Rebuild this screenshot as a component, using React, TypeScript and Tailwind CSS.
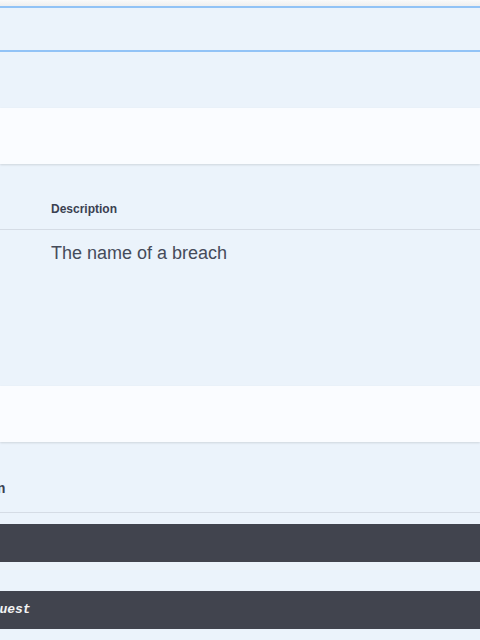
export default function App() {
  return (
    <div className="w-[480px] h-[640px] overflow-hidden bg-[#ebf3fb] font-['Liberation_Sans',Arial,sans-serif] text-[#3b4151]">
      {/* top edge */}
      <div className="h-[6px] bg-gradient-to-b from-[#fafafa] to-[#efefef]" />
      <div className="h-[2px] bg-[#92c3f6]" />

      {/* summary */}
      <div className="h-[44px] border-b-2 border-[#92c3f6]" />

      {/* description area */}
      <div className="h-[56px]" />

      {/* section header */}
      <div className="h-[56px] bg-[#fafcff] shadow-[0_1px_2px_rgba(0,0,0,0.12)]" />

      {/* parameters table */}
      <div className="mt-[2px]">
        <div className="h-[64px] flex items-end border-b border-[#d5dce5]">
          <span className="ml-[51px] mb-[13px] text-[12px] font-bold leading-[14px]">Description</span>
        </div>
        <div className="h-[156px] pt-[12px]">
          <p className="ml-[51px] text-[18px] leading-[22px] text-[#454b5a]">The name of a breach</p>
        </div>
      </div>

      {/* responses header */}
      <div className="h-[56px] bg-[#fafcff] shadow-[0_1px_2px_rgba(0,0,0,0.12)]" />

      <div className="mt-[2px] h-[69px] flex items-end border-b border-[#d5dce5]">
        <span className="-ml-[3px] mb-[15px] font-['Liberation_Mono',monospace] text-[14px] font-semibold leading-[16px]">
          n
        </span>
      </div>

      <div className="h-[11px]" />
      <div className="h-[38px] bg-[#41444e]" />
      <div className="h-[29px]" />
      <div className="h-[38px] bg-[#41444e] flex items-center overflow-hidden">
        <span className="-ml-[24px] font-['Liberation_Mono',monospace] text-[13px] font-bold italic text-[#f4f4f4]">
          Request
        </span>
      </div>
    </div>
  );
}
